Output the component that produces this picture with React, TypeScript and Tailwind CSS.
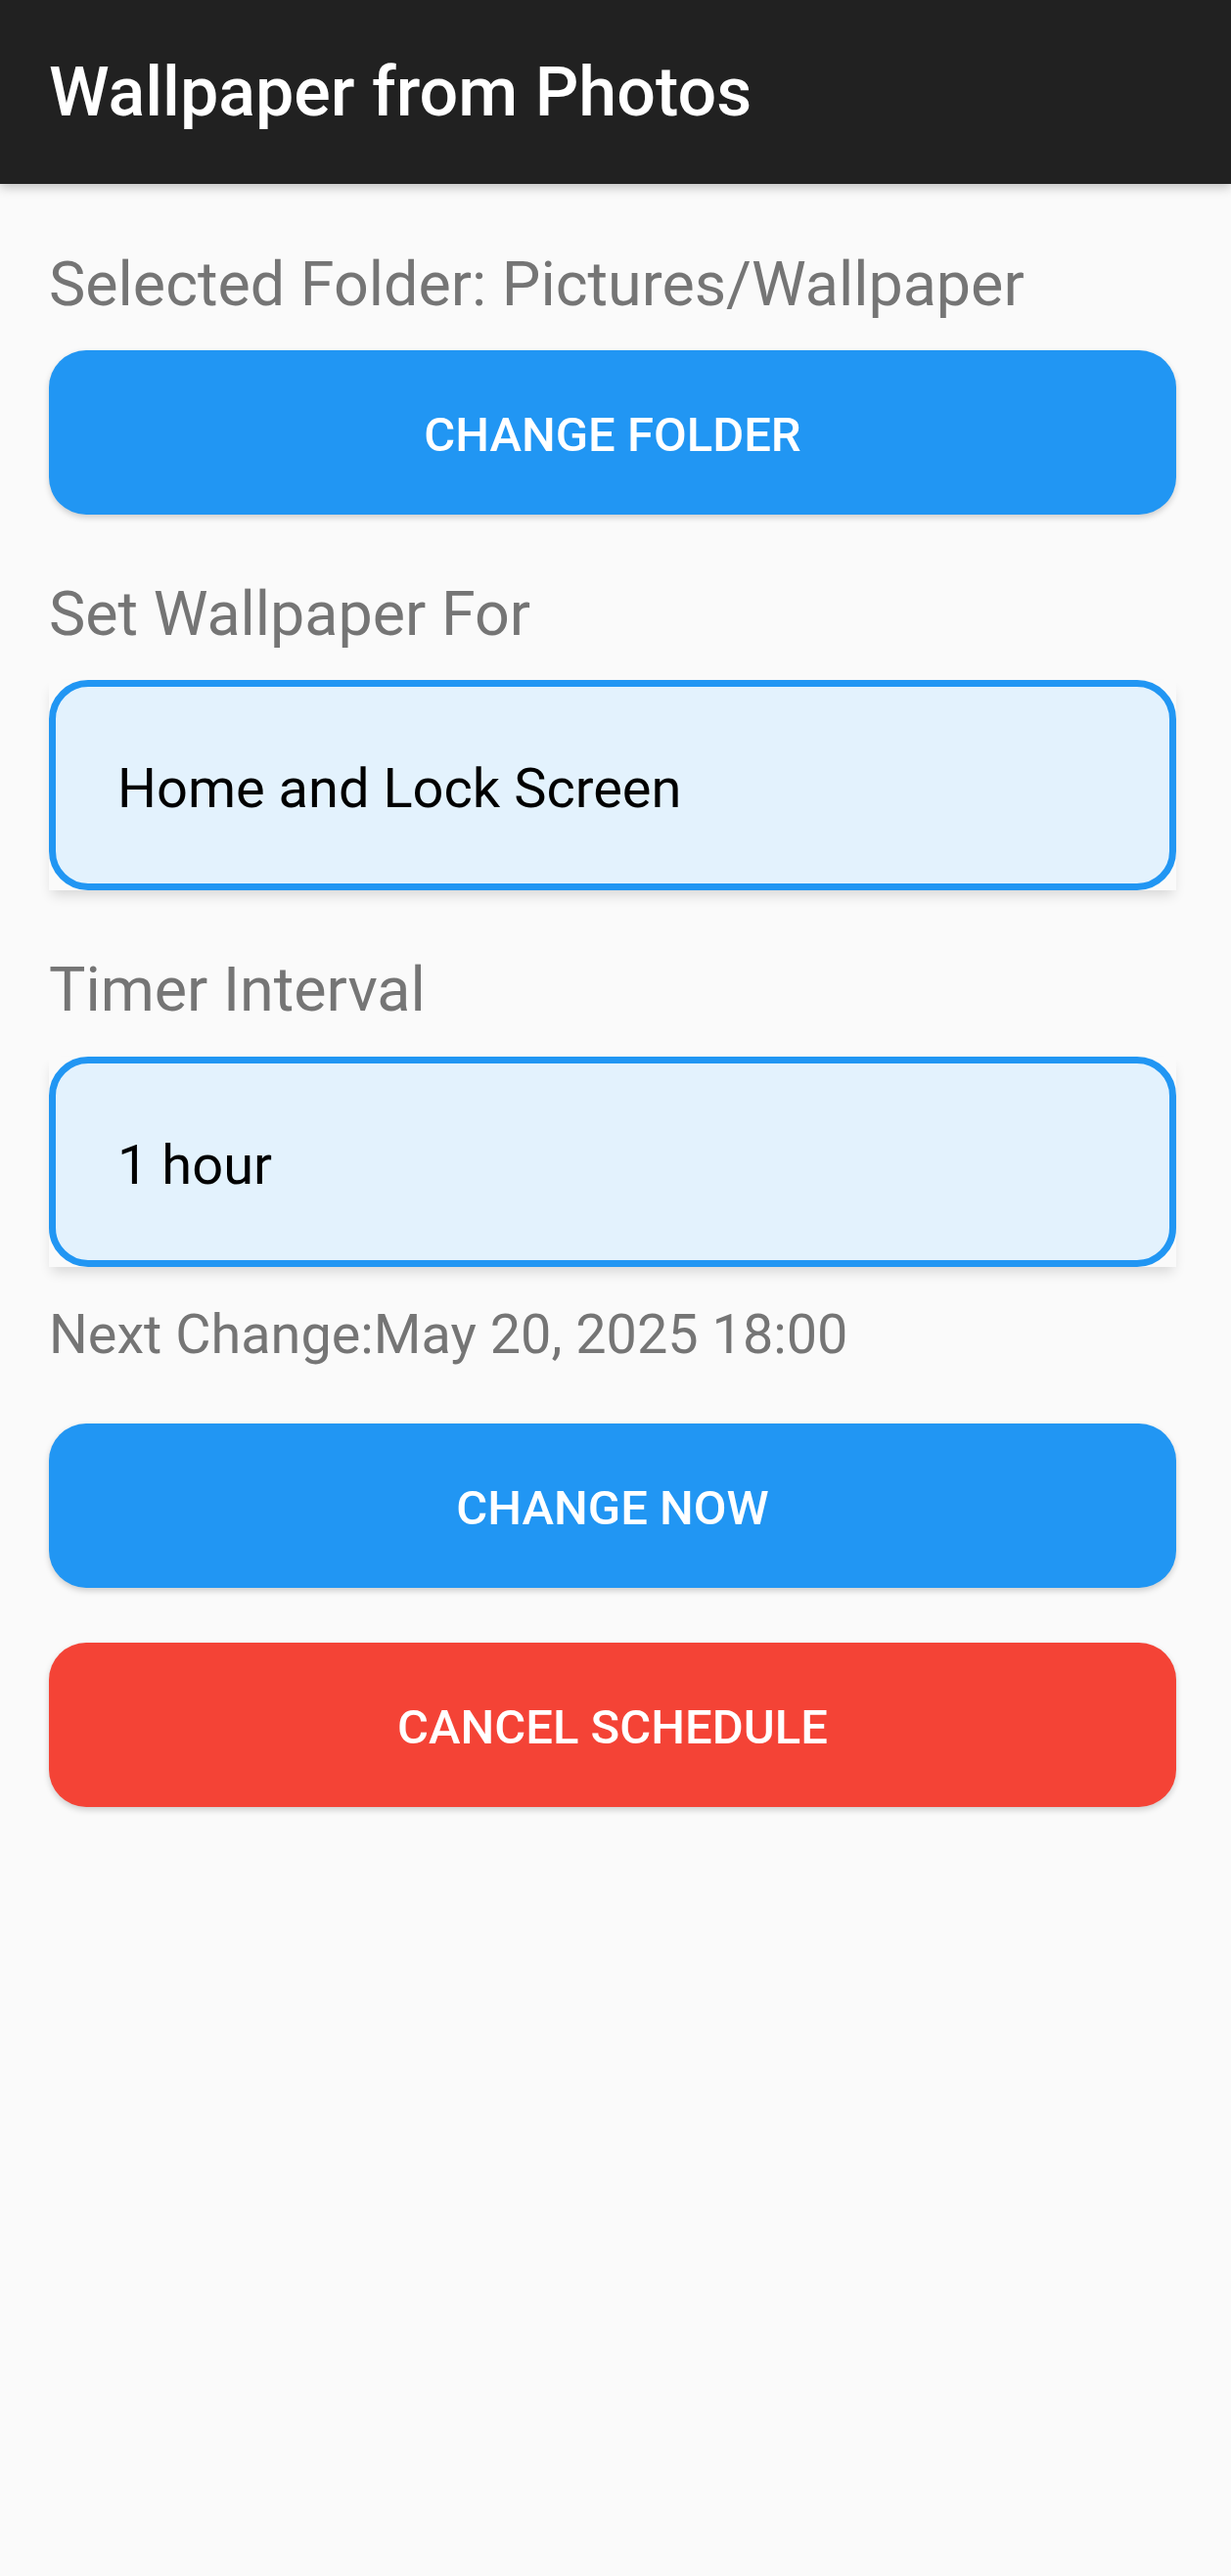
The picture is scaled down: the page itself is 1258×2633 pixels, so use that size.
import React from "react";

function ActionButton({ label, color }: { label: string; color: "blue" | "red" }) {
  const bg = color === "blue" ? "bg-[#2196f3]" : "bg-[#f44336]";
  return (
    <button
      className={`flex h-[168px] w-full items-center justify-center rounded-[38px] ${bg} pt-[6px] text-[49px] font-medium leading-[58px] tracking-normal text-white shadow-[0_3px_6px_rgba(0,0,0,0.18)]`}
    >
      {label}
    </button>
  );
}

function Dropdown({ value }: { value: string }) {
  return (
    <div className="shadow-[0_8px_12px_-3px_rgba(0,0,0,0.14)]">
      <div className="flex h-[215px] items-center rounded-[40px] border-[7px] border-[#2196f3] bg-[#e3f2fd] pl-[63px] pt-[6px]">
        <span className="text-[56px] leading-[66px] text-black">{value}</span>
      </div>
    </div>
  );
}

function Label({ text, className = "" }: { text: string; className?: string }) {
  return <p className={`text-[62.8px] leading-[74px] text-[#757575] ${className}`}>{text}</p>;
}

export default function App() {
  return (
    <div className="min-h-[2633px] bg-[#fafafa] font-['Roboto',sans-serif]">
      <header className="relative z-10 flex h-[188px] items-center bg-[#212121] pl-[50px] shadow-[0_4px_10px_rgba(0,0,0,0.22)]">
        <h1 className="text-[70px] font-medium leading-[82px] text-white">Wallpaper from Photos</h1>
      </header>
      <main className="flex flex-col pl-[50px] pr-[56px]">
        <Label text="Selected Folder: Pictures/Wallpaper" className="mt-[66px]" />
        <div className="mt-[30px]">
          <ActionButton label="CHANGE FOLDER" color="blue" />
        </div>
        <Label text="Set Wallpaper For" className="mt-[65px]" />
        <div className="mt-[30px]">
          <Dropdown value="Home and Lock Screen" />
        </div>
        <Label text="Timer Interval" className="mt-[65px]" />
        <div className="mt-[31px]">
          <Dropdown value="1 hour" />
        </div>
        <p className="mt-[36px] text-[55.8px] leading-[66px] text-[#757575]">Next Change:May 20, 2025 18:00</p>
        <div className="mt-[58px]">
          <ActionButton label="CHANGE NOW" color="blue" />
        </div>
        <div className="mt-[56px]">
          <ActionButton label="CANCEL SCHEDULE" color="red" />
        </div>
      </main>
    </div>
  );
}
